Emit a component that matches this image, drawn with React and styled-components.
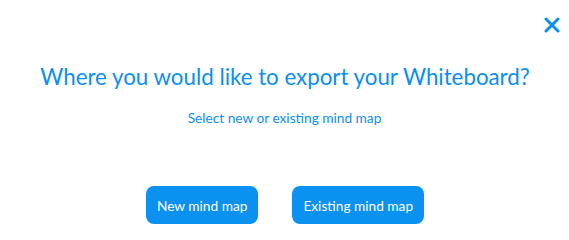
import React from 'react';
import styled, { createGlobalStyle } from 'styled-components';

const GlobalStyle = createGlobalStyle`
  html, body {
    margin: 0;
    padding: 0;
    background: #ffffff;
  }
  body {
    font-family: Lato, "Open Sans", "Liberation Sans", sans-serif;
  }
`;

const Dialog = styled.div`
  position: relative;
  width: 569px;
  height: 240px;
  box-sizing: border-box;
  padding-top: 58px;
  display: flex;
  flex-flow: column nowrap;
  align-items: center;
  background: #ffffff;
`;

const CloseButton = styled.button`
  position: absolute;
  top: 14px;
  right: 6px;
  width: 22px;
  height: 22px;
  padding: 0;
  border: none;
  background: transparent;
  cursor: pointer;
  display: flex;
  align-items: center;
  justify-content: center;
`;

const Title = styled.h1`
  margin: 0 0 0 1px;
  font-size: 22.3px;
  font-weight: 400;
  line-height: 38px;
  color: #0b8ff0;
  white-space: nowrap;
`;

const Subtitle = styled.p`
  margin: 12px 0 0;
  font-size: 13.7px;
  line-height: 20px;
  color: #0b8ff0;
`;

const Actions = styled.div`
  margin-top: 58px;
  display: flex;
  flex-flow: row nowrap;
  gap: 34px;
  padding-left: 1px;
`;

const ActionButton = styled.button`
  height: 38px;
  padding: 0 11px;
  border: none;
  border-radius: 8px;
  background: #0b92f0;
  color: #ffffff;
  font-family: Lato, "Open Sans", "Liberation Sans", sans-serif;
  font-size: 13.7px;
  font-weight: 400;
  cursor: pointer;
`;

const App = () => {
  return (
    <>
      <GlobalStyle />
      <Dialog>
        <CloseButton aria-label="Close">
          <svg width="16" height="16" viewBox="0 0 16 16">
            <path d="M2 2 L14 14 M14 2 L2 14" stroke="#0b8ff0" strokeWidth="3" strokeLinecap="round" />
          </svg>
        </CloseButton>
        <Title>Where you would like to export your Whiteboard?</Title>
        <Subtitle>Select new or existing mind map</Subtitle>
        <Actions>
          <ActionButton>New mind map</ActionButton>
          <ActionButton>Existing mind map</ActionButton>
        </Actions>
      </Dialog>
    </>
  );
};

export default App;
